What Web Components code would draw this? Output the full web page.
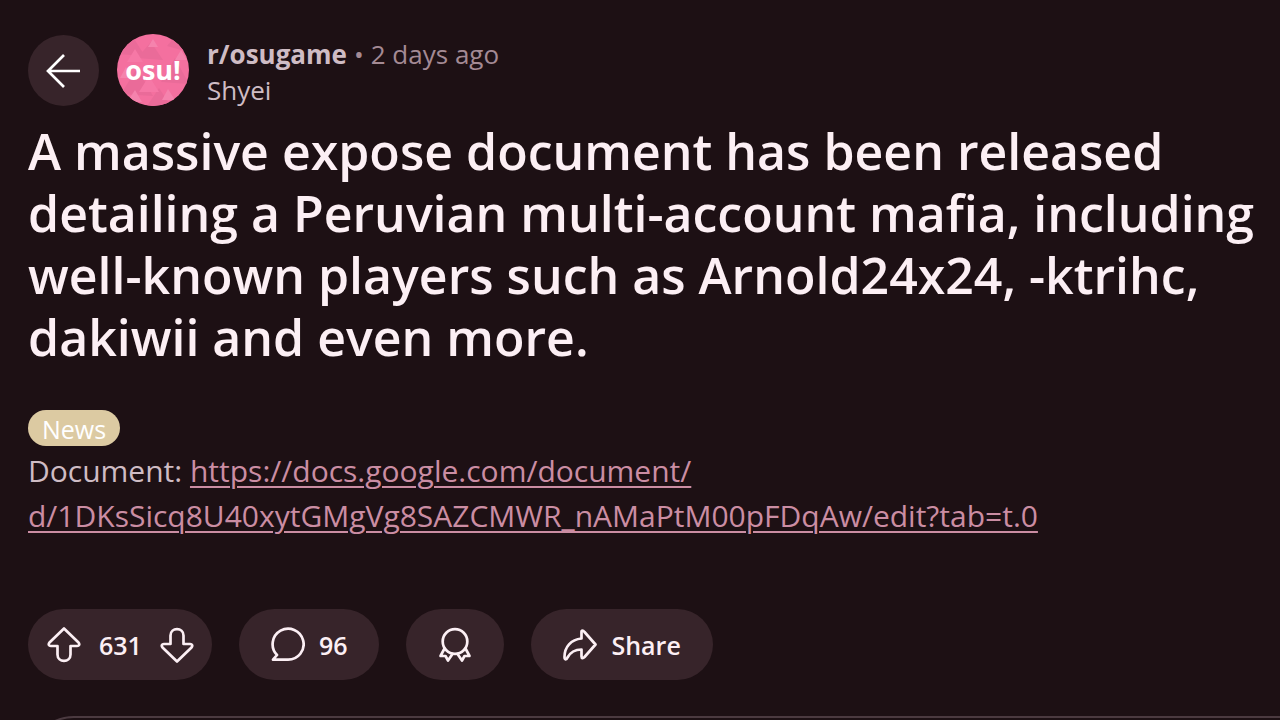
<!DOCTYPE html>
<html lang="en">
<head>
<meta charset="utf-8">
<meta name="viewport" content="width=device-width, initial-scale=1">
<title>r/osugame</title>
<style>
html { background: #1d1014; }
body { margin: 0; background: #1d1014; color: #cfbcc4; font-family: "Open Sans", "Noto Sans", sans-serif; overflow: hidden; }
</style>
</head>
<body>
<post-page></post-page>
<script>
const define = (name, html) => {
  const template = document.createElement('template');
  template.innerHTML = html;
  customElements.define(name, class extends HTMLElement {
    constructor() {
      super();
      this.attachShadow({ mode: 'open' }).append(template.content.cloneNode(true));
    }
  });
};

define('community-avatar', `
<style>
:host { display: grid; place-items: center; width: 72px; height: 72px; border-radius: 50%; overflow: hidden; background: #f4709f; }
svg, span { grid-area: 1 / 1; }
span { color: #fff; font-size: 27px; line-height: 36px; font-weight: 700; }
</style>
<svg width="72" height="72" viewBox="0 0 72 72" aria-hidden="true">
<g fill="#ea6b99"><path d="M0 20 14 0 28 22zM50 12 60 0 72 18zM20 24 34 8 46 26zM4 60 20 34 36 62z"/><path d="M44 48 58 24 72 50zM30 72 42 54 54 72z"/></g>
<g fill="#f583ad"><path d="M31 13 36 5 41 13zM3 44 9 33 15 44zM10 68 18 56 25 68zM45 66 51 55 58 66zM58 26 64 16 70 26z"/></g>
<path fill="#f678a6" d="M22 58 32 42 42 58zM10 28 18 15 26 28z"/>
</svg>
<span>osu!</span>`);

define('post-header', `
<style>
:host { display: flex; align-items: flex-start; gap: 18px; }
button { flex: none; display: grid; place-items: center; width: 71px; height: 71px; margin: 1px 0 0; padding: 0 2px 0 0; border: 0; border-radius: 50%; background: #37242a; color: #fff; }
.by { display: grid; padding-top: 2px; font-size: 26px; line-height: 36px; }
.line { display: flex; gap: 7px; color: #a48a94; }
a { color: #cfbcc4; text-decoration: none; }
.sub { font-weight: 700; }
</style>
<button type="button" aria-label="Back"><svg width="36" height="36" viewBox="0 0 36 36" fill="none" stroke="currentColor" stroke-width="2.7"><path d="M35 18H3M19 2 3 18 19 34"/></svg></button>
<community-avatar></community-avatar>
<div class="by">
<div class="line"><a class="sub" href="#sub">r/osugame</a><span>•</span><time>2 days ago</time></div>
<a href="#author">Shyei</a>
</div>`);

define('post-flair', `
<style>
:host { display: inline-block; padding: 2px 14px 0; border-radius: 18px; background: #dccaa2; color: #fff; font-size: 25px; line-height: 34px; }
</style><slot></slot>`);

define('action-pill', `
<style>
:host { display: flex; align-items: center; height: 71px; border-radius: 36px; background: #37242a; color: #fceff4; font-size: 25px; font-weight: 600; box-sizing: border-box; padding: 0 32px; }
</style><slot></slot>`);

define('vote-control', `
<style>
:host { display: block; }
action-pill { padding: 0 18px 0 19px; gap: 18px; }
button { display: flex; padding: 0; border: 0; background: none; color: inherit; }
</style>
<action-pill>
<button type="button" aria-label="Upvote"><svg width="34" height="36" viewBox="0 0 34 36" fill="none" stroke="currentColor" stroke-width="2.7" stroke-linejoin="round"><path d="M17 1.500 2.500 15.500C1 17.500 2 19 3.800 19H10.500V27.500C10.500 36 23.500 36 23.500 27.500V19H30.200C32 19 33 17.500 31.500 15.500Z"/></svg></button>
<span>631</span>
<button type="button" aria-label="Downvote"><svg width="34" height="36" viewBox="0 0 34 36" fill="none" stroke="currentColor" stroke-width="2.7" stroke-linejoin="round"><path d="M17 34.500 2.500 20.500C1 18.500 2 17 3.800 17H10.500V8.500C10.500 0 23.500 0 23.500 8.500V17H30.200C32 17 33 18.500 31.500 20.500Z"/></svg></button>
</action-pill>`);

define('icon-button', `
<style>
:host { display: block; }
button { display: block; padding: 0; border: 0; background: none; font: inherit; color: inherit; }
div { display: flex; align-items: center; gap: 14px; }
</style>
<button type="button"><action-pill><div><slot name="icon"></slot><slot></slot></div></action-pill></button>`);

define('post-actions', `
<style>
:host { display: flex; flex-wrap: wrap; gap: 27px; }
svg { display: block; fill: none; stroke: currentColor; stroke-width: 2.7; stroke-linejoin: round; stroke-linecap: round; color: #fceff4; }
</style>
<vote-control></vote-control>
<icon-button><svg slot="icon" width="34" height="36" viewBox="0 0 34 36"><path d="M6 28A15.500 15.500 0 1 1 17 32.700H2Z"/></svg><span>96</span></icon-button>
<icon-button><svg slot="icon" width="34" height="36" viewBox="0 0 34 36" aria-label="Give award"><circle cx="17" cy="14.500" r="12.300"/><path d="M6.500 21.500 2.500 29 7.500 29 10 33.500 14.500 27M27.500 21.500 31.500 29 26.500 29 24 33.500 19.500 27"/></svg></icon-button>
<icon-button><svg slot="icon" width="34" height="36" viewBox="0 0 34 36"><path d="M18.500 5V11.500C8 12.500 1.500 20 1.500 30C1.500 33 3.500 33 4.500 30.500C7.500 25 11.500 22.500 18.500 22.500V29.500C18.500 31.500 20 31.500 21.500 30L32.500 17.500 21.500 5C20 3 18.500 3 18.500 5Z"/></svg><span>Share</span></icon-button>`);

define('comment-box', `
<style>
:host { display: block; }
textarea { display: block; width: 100%; height: 96px; box-sizing: border-box; border: 2px solid #4b3a40; border-radius: 46px; background: transparent; color: inherit; font: inherit; resize: none; padding: 24px; }
</style>
<textarea aria-label="Add a comment"></textarea>`);

define('post-page', `
<style>
:host { display: block; height: 100vh; overflow: hidden; padding: 34px 0 0 28px; box-sizing: border-box; }
h1 { margin: 12px 0 42px; color: #fceff4; font-size: 50px; line-height: 62px; font-weight: 600; }
p { margin: 2px 0 71px; font-size: 30px; line-height: 45px; }
p a { color: #cb8da3; text-decoration-thickness: 2px; text-underline-offset: 4px; }
comment-box { margin: 36px -60px 0 0; }
</style>
<post-header></post-header>
<h1>A massive expose document has been released detailing a Peruvian multi-account mafia, including well-known players such as Arnold24x24, -ktrihc, dakiwii and even more.</h1>
<post-flair>News</post-flair>
<p>Document: <a href="https://docs.google.com/document/d/1DKsSicq8U40xytGMgVg8SAZCMWR_nAMaPtM00pFDqAw/edit?tab=t.0">https://docs.google.com/document/<br>d/1DKsSicq8U40xytGMgVg8SAZCMWR_nAMaPtM00pFDqAw/edit?tab=t.0</a></p>
<post-actions></post-actions>
<comment-box></comment-box>`);
</script>
</body>
</html>
